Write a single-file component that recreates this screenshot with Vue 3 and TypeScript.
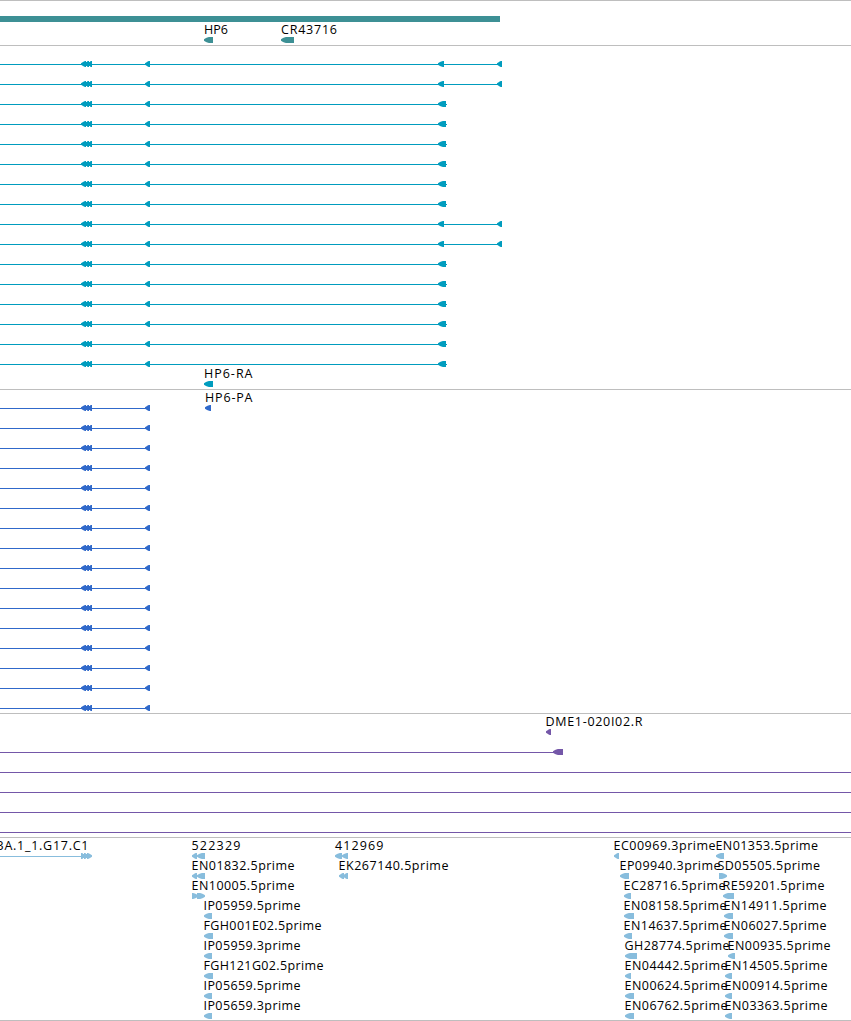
<script setup lang="ts">
interface Label { x: number; y: number; w: number; text: string }
interface Arrow { x: number; y: number; w: number; right?: boolean; group?: boolean }
interface Segment { y: number; end: number }
interface Track {
  id: string
  top: number
  height: number
  color: string
  labels: Label[]
  arrows: Arrow[]
  lines: Segment[]
}

const VIEW_WIDTH = 851
const ROW = 20

const label = (x: number, y: number, w: number, text: string): Label => ({ x, y, w, text })
const left = (x: number, y: number, w: number): Arrow => ({ x, y, w })
const right = (x: number, y: number, w: number): Arrow => ({ x, y, w, right: true })

/** Upper edge of three overlapping heads, with a notch between neighbours. */
const GROUP_EDGE: [number, number][] = [
  [0, 2.2], [2, 1], [4, 0], [5, 0], [5, 1], [6, 1], [6, 0.5], [7, 0], [8, 0], [8, 1], [9, 1], [9, 0.5], [10, 0], [11, 0],
]

/** Arrowhead, six pixels high, tapering over its first pixels into a square body. */
function shape(a: Arrow): string {
  const head = Math.min(a.w - 1, 5)
  const edge: [number, number][] = a.group
    ? GROUP_EDGE
    : [[0, 2.2], [2, 1], [head - 1, 0.2], [head, 0], [a.w, 0]]
  const mirrored = edge.map(([dx, dy]): [number, number] => [dx, 6 - dy]).reverse()
  return [...edge, ...mirrored]
    .map(([dx, dy]) => `${a.right ? a.x + a.w - dx : a.x + dx},${a.y - 3 + dy}`)
    .join(' ')
}

const exonGroup = (y: number, isRight = false): Arrow => ({ x: 81, y, w: 11, group: true, right: isRight })

const transcriptArrows: Arrow[] = []
const transcriptLines: Segment[] = []
for (let i = 0; i < 16; i++) {
  const y = 64 + i * ROW
  const long = [0, 1, 8, 9].includes(i)
  transcriptArrows.push(exonGroup(y), left(145, y, 5))
  if (long) transcriptArrows.push(left(438, y, 6), left(497, y, 5))
  else transcriptArrows.push(left(438, y, 8))
  transcriptLines.push({ y, end: long ? 500 : 447 })
}

const codingArrows: Arrow[] = []
const codingLines: Segment[] = []
for (let i = 0; i < 16; i++) {
  const y = 408 + i * ROW
  codingArrows.push(exonGroup(y), left(145, y, 5))
  codingLines.push({ y, end: 149 })
}

const tracks: Track[] = [
  {
    id: 'genes', top: 1, height: 45, color: '#3d9095',
    labels: [label(204, 34, 24, 'HP6'), label(281, 34, 56, 'CR43716')],
    arrows: [left(204, 40, 9), left(281, 40, 13)], lines: [],
  },
  {
    id: 'transcripts', top: 46, height: 344, color: '#009cbe',
    labels: [label(204, 378, 48.5, 'HP6-RA')],
    arrows: [...transcriptArrows, left(204, 384, 9)], lines: transcriptLines,
  },
  {
    id: 'coding', top: 390, height: 324, color: '#3069ca',
    labels: [label(205, 402, 47.5, 'HP6-PA')],
    arrows: [...codingArrows, left(205, 408, 6)], lines: codingLines,
  },
  {
    id: 'clones', top: 714, height: 124, color: '#7457a8',
    labels: [label(545.5, 726, 97, 'DME1-020I02.R')],
    arrows: [left(546, 732, 5), left(553, 752, 10)],
    lines: [{ y: 752, end: 554 }, ...[772, 792, 812, 832].map((y) => ({ y, end: VIEW_WIDTH }))],
  },
  {
    id: 'ests', top: 838, height: 183, color: '#88bddd',
    labels: [
      label(-3.5, 850, 92, '3A.1_1.G17.C1'),
      label(191.5, 850, 49, '522329'),
      label(191.5, 870, 103, 'EN01832.5prime'),
      label(191.5, 890, 103, 'EN10005.5prime'),
      label(203.5, 910, 97, 'IP05959.5prime'),
      label(203.5, 930, 118, 'FGH001E02.5prime'),
      label(203.5, 950, 97, 'IP05959.3prime'),
      label(203.5, 970, 120, 'FGH121G02.5prime'),
      label(203.5, 990, 97, 'IP05659.5prime'),
      label(203.5, 1010, 97, 'IP05659.3prime'),
      label(335, 850, 48.5, '412969'),
      label(338.5, 870, 110, 'EK267140.5prime'),
      label(613.5, 850, 102, 'EC00969.3prime'),
      label(619.5, 870, 101, 'EP09940.3prime'),
      label(623.5, 890, 102, 'EC28716.5prime'),
      label(623.5, 910, 103, 'EN08158.5prime'),
      label(623.5, 930, 103, 'EN14637.5prime'),
      label(624.5, 950, 105, 'GH28774.5prime'),
      label(624.5, 970, 103, 'EN04442.5prime'),
      label(624.5, 990, 103, 'EN00624.5prime'),
      label(624.5, 1010, 103, 'EN06762.5prime'),
      label(715.5, 850, 102.5, 'EN01353.5prime'),
      label(717.5, 870, 102.5, 'SD05505.5prime'),
      label(722.5, 890, 102, 'RE59201.5prime'),
      label(723.5, 910, 103, 'EN14911.5prime'),
      label(723.5, 930, 103, 'EN06027.5prime'),
      label(727.5, 950, 103, 'EN00935.5prime'),
      label(724.5, 970, 103, 'EN14505.5prime'),
      label(724.5, 990, 103, 'EN00914.5prime'),
      label(724.5, 1010, 103, 'EN03363.5prime'),
    ],
    arrows: [
      exonGroup(856, true),
      left(192, 856, 5), left(197, 856, 8),
      left(192, 876, 5), left(197, 876, 8),
      right(192, 896, 6), right(197, 896, 8),
      left(204, 916, 8), left(204, 936, 9), left(204, 956, 8),
      left(204, 976, 9), left(204, 996, 8), left(204, 1016, 8),
      left(335, 856, 7), left(342, 856, 6),
      left(339, 876, 5), left(343, 876, 5),
      left(614, 856, 5), left(620, 876, 9), left(624, 896, 7),
      left(624, 916, 10), left(624, 936, 8), left(625, 956, 12),
      left(625, 976, 6), left(625, 996, 9), left(625, 1016, 9),
      left(716, 856, 8), right(719, 876, 8), left(723, 896, 11),
      left(724, 916, 9), left(724, 936, 9), left(728, 956, 7),
      left(725, 976, 7), left(725, 996, 7), left(725, 1016, 7),
    ],
    lines: [{ y: 856, end: 82 }],
  },
]
</script>

<template>
  <main class="browser">
    <section v-for="t in tracks" :key="t.id" class="track">
      <svg
        class="canvas"
        :width="VIEW_WIDTH"
        :height="t.height - 1"
        :viewBox="`0 ${t.top} ${VIEW_WIDTH} ${t.height - 1}`"
      >
        <g :fill="t.color">
          <rect v-if="t.id === 'genes'" x="0" y="16" width="500" height="6" />
          <rect v-for="l in t.lines" :key="l.y" x="0" :y="l.y" :width="l.end" height="1" />
          <polygon v-for="(a, i) in t.arrows" :key="i" :points="shape(a)" />
        </g>
        <text
          v-for="l in t.labels"
          :key="l.text"
          class="label"
          :x="l.x"
          :y="l.y"
          :textLength="l.w"
        >{{ l.text }}</text>
      </svg>
    </section>
  </main>
</template>

<style>
body {
  margin: 0;
  background: #fff;
}
</style>

<style scoped>
.browser {
  display: flex;
  flex-direction: column;
  width: 851px;
  height: 1021px;
  box-sizing: border-box;
  overflow: hidden;
  border-top: 1px solid #bebebe;
  background: #fff;
}
.track {
  flex: none;
  border-bottom: 1px solid #bebebe;
}
.canvas {
  display: block;
}
.label {
  font-family: "Open Sans", "Noto Sans", sans-serif;
  font-size: 12.5px;
  fill: #000;
}
</style>
